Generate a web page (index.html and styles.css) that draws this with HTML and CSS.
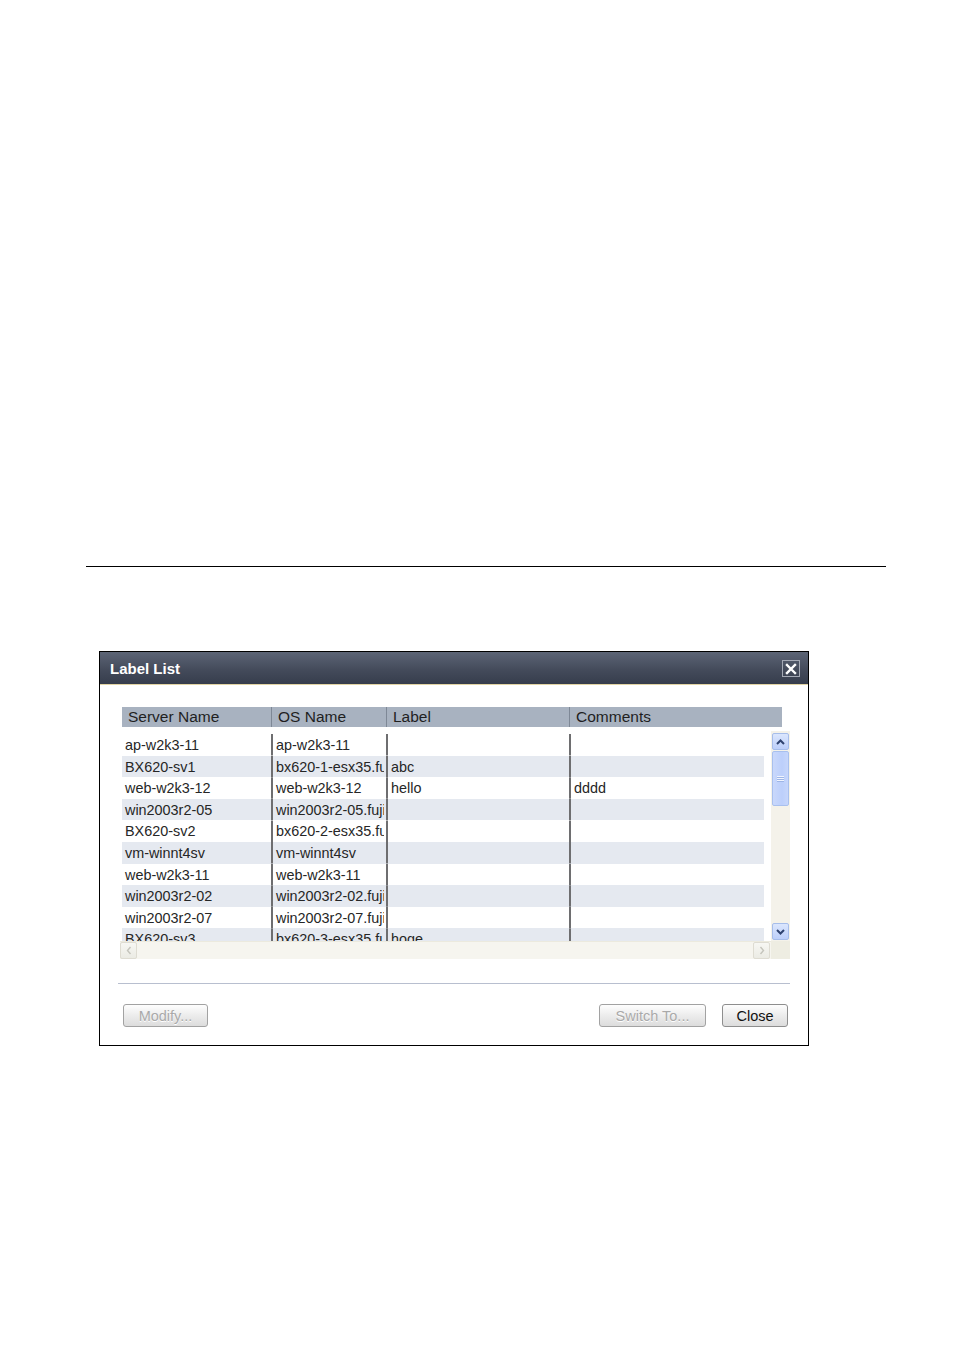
FILE: index.html
```html
<!DOCTYPE html>
<html>
<head>
<meta charset="utf-8">
<title>Label List</title>
<link rel="stylesheet" href="styles.css">
</head>
<body>
<div class="page">
  <div class="rule"></div>
  <div class="dialog">
    <div class="titlebar">
      <span class="title">Label List</span>
      <span class="xbtn"><svg width="12" height="12" viewBox="0 0 12 12"><path d="M2 2 L10 10 M10 2 L2 10" stroke="#fff" stroke-width="2.4" stroke-linecap="square"/></svg></span>
    </div>
    <div class="content">
      <div class="thead">
        <div class="th">Server Name</div>
        <div class="th">OS Name</div>
        <div class="th">Label</div>
        <div class="th last">Comments</div>
      </div>
      <div class="pane">
        <div class="viewport">
          <div class="rows">
            <div class="row"><div class="td">ap-w2k3-11</div><div class="td">ap-w2k3-11</div><div class="td"></div><div class="td"></div></div>
            <div class="row alt"><div class="td">BX620-sv1</div><div class="td">bx620-1-esx35.fujitsu.com</div><div class="td">abc</div><div class="td"></div></div>
            <div class="row"><div class="td">web-w2k3-12</div><div class="td">web-w2k3-12</div><div class="td">hello</div><div class="td">dddd</div></div>
            <div class="row alt"><div class="td">win2003r2-05</div><div class="td">win2003r2-05.fujitsu.com</div><div class="td"></div><div class="td"></div></div>
            <div class="row"><div class="td">BX620-sv2</div><div class="td">bx620-2-esx35.fujitsu.com</div><div class="td"></div><div class="td"></div></div>
            <div class="row alt"><div class="td">vm-winnt4sv</div><div class="td">vm-winnt4sv</div><div class="td"></div><div class="td"></div></div>
            <div class="row"><div class="td">web-w2k3-11</div><div class="td">web-w2k3-11</div><div class="td"></div><div class="td"></div></div>
            <div class="row alt"><div class="td">win2003r2-02</div><div class="td">win2003r2-02.fujitsu.com</div><div class="td"></div><div class="td"></div></div>
            <div class="row"><div class="td">win2003r2-07</div><div class="td">win2003r2-07.fujitsu.com</div><div class="td"></div><div class="td"></div></div>
            <div class="row alt"><div class="td">BX620-sv3</div><div class="td">bx620-3-esx35.fujitsu.com</div><div class="td">hoge</div><div class="td"></div></div>
          </div>
        </div>
        <div class="vscroll">
          <div class="sbtn blue"><svg width="11" height="8" viewBox="0 0 11 8"><path d="M2 6 L5.5 2.5 L9 6" fill="none" stroke="#2f4370" stroke-width="2"/></svg></div>
          <div class="thumb"><span class="grip"></span></div>
          <div class="vtrack"></div>
          <div class="sbtn blue"><svg width="11" height="8" viewBox="0 0 11 8"><path d="M2 2 L5.5 5.5 L9 2" fill="none" stroke="#2f4370" stroke-width="2"/></svg></div>
        </div>
        <div class="hscroll">
          <div class="sbtn pale"><svg width="8" height="11" viewBox="0 0 8 11"><path d="M5.5 2 L2.5 5.5 L5.5 9" fill="none" stroke="#c4c4bc" stroke-width="1.4"/></svg></div>
          <div class="htrack"></div>
          <div class="sbtn pale"><svg width="8" height="11" viewBox="0 0 8 11"><path d="M2.5 2 L5.5 5.5 L2.5 9" fill="none" stroke="#c4c4bc" stroke-width="1.4"/></svg></div>
        </div>
        <div class="corner"></div>
      </div>
      <div class="sep"></div>
      <div class="footer">
        <button class="btn modify" disabled>Modify...</button>
        <button class="btn switch" disabled>Switch To...</button>
        <button class="btn close">Close</button>
      </div>
    </div>
  </div>
</div>
</body>
</html>
```
FILE: styles.css
```css
html, body {
  margin: 0;
  background: #fff;
}
body {
  font-family: "Liberation Sans", Arial, sans-serif;
  color: #222;
}
.page {
  padding-top: 566px;
}
.rule {
  margin-left: 86px;
  width: 800px;
  height: 1px;
  background: #000;
}
.dialog {
  margin: 84px 0 0 99px;
  width: 708px;
  height: 393px;
  border: 1px solid #000;
  background: #fff;
}
.titlebar {
  height: 32px;
  border-bottom: 1px solid #e2d4a4;
  background: linear-gradient(#5c6475, #444b5b 55%, #363d4c);
  display: flex;
  align-items: center;
  justify-content: space-between;
  padding: 0 8px 0 10px;
}
.title {
  color: #fff;
  font-weight: bold;
  font-size: 15px;
  padding-top: 1px;
}
.xbtn {
  width: 16px;
  height: 15px;
  border: 1px solid #a4a9b4;
  display: flex;
  align-items: center;
  justify-content: center;
  margin-top: 1px;
}
.content {
  padding-top: 22px;
}
.thead {
  margin-left: 22px;
  width: 660px;
  height: 20px;
  background: #a8b2c0;
  display: grid;
  grid-template-columns: 150px 115px 183px 212px;
}
.th {
  border-right: 1px solid #7e8896;
  padding-left: 6px;
  font-size: 15.5px;
  line-height: 20px;
  color: #1f1f1f;
  white-space: nowrap;
  overflow: hidden;
}
.th.last {
  border-right: none;
}
.pane {
  margin: 4px 0 0 20px;
  width: 670px;
  height: 228px;
  display: grid;
  grid-template-columns: 651px 19px;
  grid-template-rows: 210px 18px;
}
.viewport {
  overflow: hidden;
  padding: 3px 0 0 2px;
  background: #fff;
}
.rows {
  width: 642px;
}
.row {
  display: grid;
  grid-template-columns: 149px 115px 183px 195px;
  height: 21.6px;
}
.row.alt {
  background: #e5e9f0;
}
.td {
  font-size: 14.4px;
  line-height: 20.6px;
  padding-top: 1px;
  color: #262626;
  white-space: nowrap;
  overflow: hidden;
  padding-left: 3px;
  border-left: 2px solid #6e6e70;
  clip-path: inset(0 2px 0 0);
}
.td:first-child {
  border-left: none;
}
.vscroll {
  background: #f4f2ea;
  display: flex;
  flex-direction: column;
  padding: 2px 1px 1px 1px;
  gap: 1px;
}
.sbtn {
  width: 17px;
  height: 17px;
  box-sizing: border-box;
  border-radius: 2px;
  display: flex;
  align-items: center;
  justify-content: center;
  flex: none;
}
.sbtn.blue {
  background: linear-gradient(#dbe6fd, #bccffa);
  border: 1px solid #a6bdea;
}
.sbtn.pale {
  background: linear-gradient(#f7f7f3, #ebebe4);
  border: 1px solid #dedcd2;
}
.thumb {
  height: 55px;
  box-sizing: border-box;
  border: 1px solid #a8c0ee;
  border-radius: 2px;
  background: linear-gradient(90deg, #c9d8fb, #bccffb 60%, #c6d6fb);
  display: flex;
  align-items: center;
  justify-content: center;
  flex: none;
}
.grip {
  width: 7px;
  height: 6px;
  background: repeating-linear-gradient(#f0f4fe 0 1px, #9db5e6 1px 2px);
}
.vtrack {
  flex: 1;
}
.hscroll {
  background: #f6f5ef;
  border-top: 1px solid #eceade;
  display: flex;
  align-items: center;
  padding: 0 1px 0 0;
}
.htrack {
  flex: 1;
}
.corner {
  background: #eeede2;
}
.sep {
  margin: 24px 0 0 18px;
  width: 672px;
  height: 1px;
  background: #b8bfcf;
}
.footer {
  margin-top: 20px;
  padding: 0 20px 0 23px;
  display: flex;
  align-items: center;
}
.btn {
  height: 23px;
  box-sizing: border-box;
  border: 1px solid #8e8e8e;
  border-radius: 3px;
  background: linear-gradient(#fefefe, #ececec 50%, #dcdcdc);
  font-family: "Liberation Sans", Arial, sans-serif;
  font-size: 14.5px;
  color: #111;
  padding: 0;
  line-height: 20px;
}
.btn:disabled {
  color: #a9a9a9;
  border-color: #a2a2a2;
  text-shadow: 0 1px 0 #fff;
}
.modify {
  width: 85px;
}
.switch {
  width: 107px;
  margin-left: auto;
}
.close {
  width: 66px;
  margin-left: 16px;
}
```
